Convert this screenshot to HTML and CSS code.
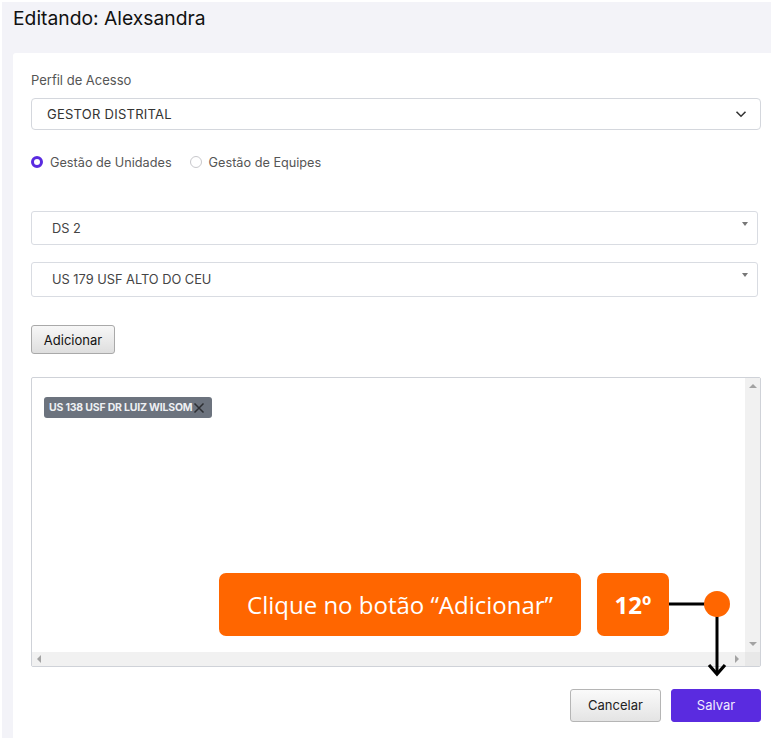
FILE: index.html
```html
<!DOCTYPE html>
<html lang="pt">
<head>
<meta charset="utf-8">
<title>Editando</title>
<link rel="stylesheet" href="styles.css">
</head>
<body>
<div class="page">
  <header class="head"><h1 class="title">Editando: Alexsandra</h1></header>
  <main class="card">
    <label class="label">Perfil de Acesso</label>
    <div class="select">
      <span class="sel-text">GESTOR DISTRITAL</span>
      <svg class="chev" width="12" height="8" viewBox="0 0 12 8"><path d="M1.5 1.8 6 6.2 10.5 1.8" fill="none" stroke="#333" stroke-width="1.6"/></svg>
    </div>
    <div class="radios">
      <span class="radio on"></span><span class="rlabel">Gestão de Unidades</span>
      <span class="radio"></span><span class="rlabel">Gestão de Equipes</span>
    </div>
    <div class="s2 first"><span>DS 2</span><i class="tri"></i></div>
    <div class="s2"><span>US 179 USF ALTO DO CEU</span><i class="tri"></i></div>
    <button class="btn-add">Adicionar</button>
    <div class="box">
      <div class="box-content">
        <span class="chip">US 138 USF DR LUIZ WILSOM<svg class="x" width="12" height="12" viewBox="0 0 12 12"><path d="M1.5 1.5 10.5 10.5M10.5 1.5 1.5 10.5" stroke="#2d2f33" stroke-width="1.5"/></svg></span>
      </div>
      <div class="vbar"><i class="up"></i><i class="down"></i></div>
      <div class="hbar"><i class="left"></i><i class="right"></i></div>
      <div class="corner"></div>

      <div class="note">Clique no botão “Adicionar”</div>
      <div class="step">12º</div>
      <svg class="connector" width="64" height="92" viewBox="0 0 64 92">
        <line x1="0" y1="14" x2="40" y2="14" stroke="#000" stroke-width="3"/>
        <line x1="48" y1="20" x2="48" y2="84" stroke="#000" stroke-width="3"/>
        <path d="M40 75 48 84 56 75" fill="none" stroke="#000" stroke-width="3.2"/>
        <circle cx="48" cy="14" r="13" fill="#ff6600"/>
      </svg>
    </div>
    <div class="actions">
      <button class="btn-cancel">Cancelar</button>
      <button class="btn-save">Salvar</button>
    </div>
  </main>
</div>
</body>
</html>
```
FILE: styles.css
```css
html, body { margin: 0; padding: 0; background: #fff; }
body { font-family: Inter, "Liberation Sans", Arial, sans-serif; color: #222; }
.page {
  margin: 2px 0 0 2px;
  background: #f3f3f8;
  height: 736px;
  display: flex;
  flex-direction: column;
  overflow: hidden;
}
.head { height: 51px; padding-left: 11px; }
.title {
  margin: 0;
  font-weight: 400;
  font-size: 19.3px;
  line-height: 23px;
  padding-top: 5px;
  color: #111;
}
.card {
  margin-left: 11px;
  background: #fff;
  flex: 1;
  padding: 19px 10px 0 18px;
  display: flex;
  flex-direction: column;
  border-top-left-radius: 3px;
}
.label { font-size: 13px; line-height: 16px; color: #555; }
.select {
  margin-top: 10px;
  height: 32px;
  box-sizing: border-box;
  border: 1px solid #d4d7dd;
  border-radius: 4px;
  display: flex;
  align-items: center;
  justify-content: space-between;
  padding: 0 13px 0 15px;
  font-size: 13px;
  color: #333;
}
.sel-text { letter-spacing: 0.25px; }
.chev { display: block; }
.radios {
  margin-top: 24px;
  height: 16px;
  display: flex;
  align-items: center;
  font-size: 12.7px;
  color: #555;
}
.radio {
  width: 12px; height: 12px; box-sizing: border-box;
  border: 1px solid #c8c8cc; border-radius: 50%;
  margin-right: 7px;
}
.radio.on { border: 3.5px solid #5a2be0; }
.rlabel { margin-right: 18px; }
.s2 {
  margin-top: 17px;
  margin-right: 3px;
  height: 35px;
  box-sizing: border-box;
  border: 1px solid #d9dce2;
  border-radius: 3px;
  display: flex;
  align-items: center;
  justify-content: space-between;
  padding: 0 9px 0 20px;
  font-size: 12.8px;
  color: #444;
}
.s2.first { margin-top: 41px; height: 34px; }
.tri {
  align-self: flex-start;
  margin-top: 10px;
  width: 0; height: 0;
  border-left: 3.5px solid transparent;
  border-right: 3.5px solid transparent;
  border-top: 4px solid #777;
}
.btn-add {
  margin-top: 28px;
  align-self: flex-start;
  width: 84px; height: 29px;
  font-family: inherit;
  font-size: 13px;
  color: #111;
  border: 1px solid #a9a9a9;
  border-radius: 3px;
  background: linear-gradient(#f7f7f7, #dedede);
  padding: 0;
}
.box {
  margin-top: 23px;
  height: 290px;
  box-sizing: border-box;
  border: 1px solid #cfd2d8;
  border-radius: 2px;
  display: grid;
  grid-template-columns: 1fr 15px;
  grid-template-rows: 1fr 14px;
  position: relative;
}
.box-content { padding: 17px 12px; }
.chip {
  display: inline-flex;
  align-items: center;
  height: 21px;
  padding: 0 7px 0 5px;
  background: #6c737e;
  color: #eef0f3;
  font-weight: 700;
  font-size: 10.5px;
  border-radius: 3px;
  letter-spacing: -0.2px;
}
.chip .x { display: block; margin-left: 1px; }
.vbar { background: #f1f1f1; position: relative; }
.hbar { background: #f1f1f1; position: relative; }
.corner { background: #e8e8e8; }
.vbar i, .hbar i { position: absolute; width: 0; height: 0; }
.up { left: 4px; top: 6px; border-left: 4px solid transparent; border-right: 4px solid transparent; border-bottom: 4px solid #a3a3a3; }
.down { left: 4px; bottom: 6px; border-left: 4px solid transparent; border-right: 4px solid transparent; border-top: 4px solid #a3a3a3; }
.left { left: 5px; top: 3px; border-top: 4px solid transparent; border-bottom: 4px solid transparent; border-right: 4px solid #a3a3a3; }
.right { right: 6px; top: 3px; border-top: 4px solid transparent; border-bottom: 4px solid transparent; border-left: 4px solid #a3a3a3; }
.note, .step {
  position: absolute;
  top: 195px;
  height: 63px;
  background: #ff6600;
  border-radius: 7px;
  color: #fff;
  font-family: "Open Sans", "Noto Sans", sans-serif;
  font-size: 24px;
  display: flex;
  align-items: center;
  justify-content: center;
}
.note { left: 187px; width: 362px; }
.step { left: 565px; width: 72px; font-weight: 700; }
.connector { position: absolute; left: 637px; top: 212px; overflow: visible; }
.actions {
  margin-top: 22px;
  display: flex;
  justify-content: flex-end;
  gap: 10px;
}
.actions button { height: 33px; font-family: inherit; font-size: 13px; border-radius: 3px; padding: 0 0 2px; }
.btn-cancel {
  width: 91px;
  color: #222;
  border: 1px solid #b5b5b5;
  background: linear-gradient(#fafafa, #e4e4e4);
}
.btn-save {
  width: 90px;
  color: #f0ecff;
  border: 1px solid #5a2be0;
  background: #5a2be0;
}
```
